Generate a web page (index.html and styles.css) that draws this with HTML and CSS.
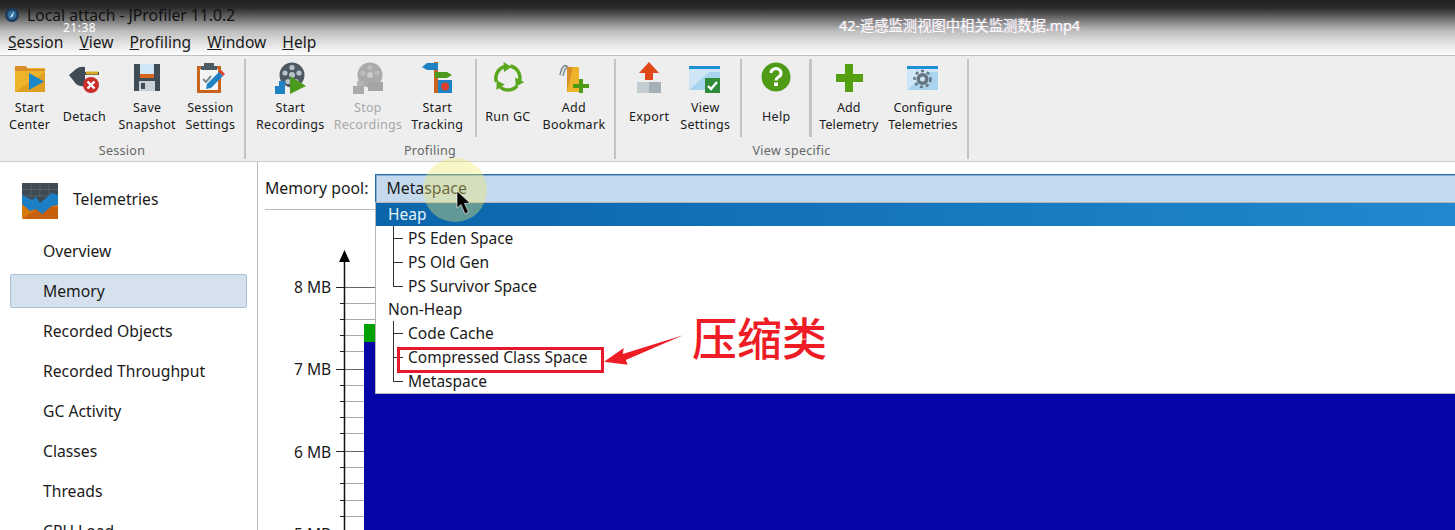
FILE: index.html
```html
<!DOCTYPE html>
<html lang="en">
<head>
  <meta charset="UTF-8">
  <title>Local attach - JProfiler 11.0.2</title>
  <link rel="stylesheet" href="styles.css">
</head>
<body>
<div class="app">
  <div class="shade"></div>
  <div class="clock">21:38</div>
  <div class="video-name">42-遥感监测视图中相关监测数据.mp4</div>

  <header class="titlebar">
    <svg class="app-icon" viewBox="0 0 14 14"><circle cx="7" cy="7" r="7" fill="#1c3b5a"/><circle cx="7" cy="7" r="4.500" fill="#2f6d9e"/><path d="M9.500 3 L6 7.500 L5 10 L7.500 8.500 Z" fill="#e8eef4"/></svg>
    <span>Local attach - JProfiler 11.0.2</span>
  </header>

  <nav class="menubar">
    <span><u>S</u>ession</span>
    <span><u>V</u>iew</span>
    <span><u>P</u>rofiling</span>
    <span><u>W</u>indow</span>
    <span><u>H</u>elp</span>
  </nav>

  <div class="toolbar">
    <section class="group group-session">
      <div class="buttons">
        <div class="tool">
          <svg viewBox="0 0 32 32"><path d="M1 6h30v24H1z" fill="#edb32b"/><path d="M1 4h11l2 3h17v2H1z" fill="#d9902a"/><path d="M1 30 L31 10 V30z" fill="#dfa022"/><path d="M15 11 L30 19.500 L15 28z" fill="#1b86c8"/></svg>
          <div class="label">Start<br>Center</div>
        </div>
        <div class="tool">
          <svg viewBox="0 0 32 32"><path d="M1 13 L8 7 Q12 4 17 5 V10 H31 V13 H17 V24 Q12 25 8 22 Z" fill="#3f4c56"/><path d="M18 9.500h12v3H18z" fill="#d9a825"/><circle cx="23" cy="23" r="8" fill="#c9302c"/><path d="M19.500 19.500l7 7m0-7l-7 7" stroke="#fff" stroke-width="2.400"/></svg>
          <div class="label">Detach</div>
        </div>
        <div class="tool">
          <svg viewBox="0 0 32 32"><path d="M3 2h26v27H3z" fill="#3f4c56"/><path d="M9 2h14v10H9z" fill="#cfe6f7"/><path d="M9 12h14v4H9z" fill="#d9661f"/><path d="M8 19h16v10H8z" fill="#c9d1d6"/><path d="M10 21h4v6h-4z" fill="#3f4c56"/></svg>
          <div class="label">Save<br>Snapshot</div>
        </div>
        <div class="tool tool-settings">
          <svg viewBox="0 0 32 32"><path d="M3 4h24v27H3z" fill="#c8641e"/><path d="M6 7h18v21H6z" fill="#f5f5f5"/><path d="M10 1h10v3h3v4H7V4h3z" fill="#4c5a64"/><path d="M9 17l3 3 5-6" fill="none" stroke="#7c8b94" stroke-width="2"/><path d="M12 27l1-5L25 10l4 4-12 12z" fill="#1e82c4"/><path d="M25 10l2-2 4 4-2 2z" fill="#d9402a"/></svg>
          <div class="label">Session<br>Settings</div>
        </div>
      </div>
      <div class="group-name">Session</div>
    </section>

    <section class="group group-profiling">
      <div class="buttons">
        <div class="tool">
          <svg viewBox="0 0 32 32"><circle cx="18" cy="13" r="12.500" fill="#4d5a64"/><circle cx="18" cy="13" r="3" fill="#b9c2c8"/><circle cx="18" cy="5.500" r="2.600" fill="#b9c2c8"/><circle cx="25" cy="11" r="2.600" fill="#b9c2c8"/><circle cx="11" cy="11" r="2.600" fill="#b9c2c8"/><circle cx="22" cy="19.500" r="2.600" fill="#b9c2c8"/><circle cx="14" cy="19.500" r="2.600" fill="#b9c2c8"/><path d="M16 14 L32 24 L16 32z" fill="#4a9a1e"/><path d="M1 24h10v8H1z" fill="#1e82c4"/><path d="M5 19h6v5H5z" fill="#1e82c4"/></svg>
          <div class="label">Start<br>Recordings</div>
        </div>
        <div class="tool off">
          <svg viewBox="0 0 32 32"><circle cx="18" cy="13" r="12.500" fill="#aaa"/><circle cx="18" cy="13" r="3" fill="#ccc"/><circle cx="18" cy="5.500" r="2.600" fill="#bbb"/><circle cx="25" cy="11" r="2.600" fill="#bbb"/><circle cx="11" cy="11" r="2.600" fill="#bbb"/><path d="M1 24h11v8H1z" fill="#aaa"/><path d="M5 19h7v5H5z" fill="#b5b5b5"/><path d="M16 20h15v9H16z" fill="#a5a5a5"/></svg>
          <div class="label">Stop<br>Recordings</div>
        </div>
        <div class="tool tool-tracking">
          <svg viewBox="0 0 32 32"><path d="M13 0h4v31h-4z" fill="#c8641e"/><path d="M1 5 L6 1 H17 V8 H6z" fill="#1e82c4"/><path d="M14 10 H26 L31 13 L26 16 H14z" fill="#4a9a1e"/><path d="M17 18h14v13H17z" fill="#1e82c4"/><circle cx="24" cy="24.500" r="4" fill="#d9402a"/></svg>
          <div class="label">Start<br>Tracking</div>
        </div>
        <div class="short-sep sep-tracking"></div>
        <div class="tool tool-gc">
          <svg viewBox="0 0 32 32">
            <g fill="#5aa71e"><path d="M4.500 20A12 12 0 0 1 13 4.500" fill="none" stroke="#5aa71e" stroke-width="3.500"/><path d="M11.500 0 L19.500 5 L12 10z"/></g>
            <g fill="#5aa71e" transform="rotate(120 16 16)"><path d="M4.500 20A12 12 0 0 1 13 4.500" fill="none" stroke="#5aa71e" stroke-width="3.500"/><path d="M11.500 0 L19.500 5 L12 10z"/></g>
            <g fill="#5aa71e" transform="rotate(240 16 16)"><path d="M4.500 20A12 12 0 0 1 13 4.500" fill="none" stroke="#5aa71e" stroke-width="3.500"/><path d="M11.500 0 L19.500 5 L12 10z"/></g>
          </svg>
          <div class="label">Run GC</div>
        </div>
        <div class="tool tool-bookmark">
          <svg viewBox="0 0 32 32"><path d="M11 7 C8 1 4 3 2 13 M12 6 C8 4 6 8 5 14" fill="none" stroke="#7c8b94" stroke-width="1.500"/><path d="M9 5h12v25H9z" fill="#edb32b"/><path d="M9 30 V5 H15z" fill="#d9902a"/><path d="M21 17h4v5h6v4h-6v5h-4v-5h-6v-4h6z" fill="#4f9a16"/></svg>
          <div class="label">Add<br>Bookmark</div>
        </div>
      </div>
      <div class="group-name">Profiling</div>
    </section>

    <section class="group group-view">
      <div class="buttons">
        <div class="tool">
          <svg viewBox="0 0 32 32"><path d="M16 0 L26 11 H20 V18 H12 V11 H6z" fill="#e0481a"/><path d="M4 20h12v11H4z" fill="#c3ccd0"/><path d="M16 20h12v11H16z" fill="#a5b0b6"/></svg>
          <div class="label">Export</div>
        </div>
        <div class="tool tool-view">
          <svg viewBox="0 0 32 32"><path d="M0 4h31v24H0z" fill="#cfe6f7"/><path d="M0 28 L20 10 L31 10 V28z" fill="#a9d4ef"/><path d="M0 4h31v3H0z" fill="#1e91d6"/><path d="M16 16h15v15H16z" fill="#2f8a3a"/><path d="M19 24l3 3 6-7" fill="none" stroke="#fff" stroke-width="2.400"/></svg>
          <div class="label">View<br>Settings</div>
        </div>
        <div class="short-sep sep-view"></div>
        <div class="tool tool-help">
          <svg viewBox="0 0 32 32"><circle cx="16" cy="15" r="14.500" fill="#4f9a16"/><path d="M11 11a5 4.500 0 1 1 7.500 4c-1.500 1-2.500 1.500-2.500 3.500" fill="none" stroke="#fff" stroke-width="3"/><path d="M14 20.500h4v3.500h-4z" fill="#fff"/></svg>
          <div class="label">Help</div>
        </div>
        <div class="short-sep thick-sep"></div>
        <div class="tool tool-add tight">
          <svg viewBox="0 0 32 32"><path d="M12 2h8v10h10v8H20v10h-8V20H3v-8h9z" fill="#55a011"/></svg>
          <div class="label">Add<br>Telemetry</div>
        </div>
        <div class="tool tight">
          <svg viewBox="0 0 32 32"><path d="M0 4h31v24H0z" fill="#cfe6f7"/><path d="M0 28 L20 10 L31 10 V28z" fill="#a9d4ef"/><path d="M0 4h31v3H0z" fill="#1e91d6"/><circle cx="15.500" cy="17" r="6" fill="#66747e"/><circle cx="15.500" cy="17" r="8" fill="none" stroke="#66747e" stroke-width="2.500" stroke-dasharray="3 3"/><circle cx="15.500" cy="17" r="2.500" fill="#cfe6f7"/></svg>
          <div class="label">Configure<br>Telemetries</div>
        </div>
      </div>
      <div class="group-name">View specific</div>
    </section>
  </div>

  <main class="main">
    <aside class="sidebar">
      <div class="side-head">
        <svg viewBox="0 0 36 36"><rect width="36" height="36" rx="2" fill="#d67a0a"/><path d="M0 36 L18 24 L36 24 V36z" fill="#c7600a"/><path d="M0 0h36v20H0z" fill="#3d4a54"/><path d="M0 6.500H36M0 13H36M9 0V14M18 0V14M27 0V14" stroke="#55626c"/><path d="M0 12 L6 15 L10 17 L14 14 L18 20 L24 15 L30 10 L36 12 V22 L30 23 L26 26 L20 31 L14 26 L8 28 L0 21z" fill="#1a7fc4"/></svg>
        <span>Telemetries</span>
      </div>
      <ul class="side-list">
        <li>Overview</li>
        <li class="current">Memory</li>
        <li>Recorded Objects</li>
        <li>Recorded Throughput</li>
        <li>GC Activity</li>
        <li>Classes</li>
        <li>Threads</li>
        <li>CPU Load</li>
      </ul>
    </aside>

    <div class="content">
      <div class="pool-row">
        <label>Memory pool:</label>
        <div class="combo">Metaspace</div>
      </div>
      <div class="chart">
        <svg class="chart-svg" viewBox="0 0 1197 320">
          <path d="M86 93.500H117M86 109.500H117M86 125.500H117M86 141.500H106M86 175.500H106M86 191.500H106M86 207.500H106M86 223.500H106M86 257.500H106M86 273.500H106M86 290.500H106M86 306.500H106" stroke="#aaa"/>
          <path d="M86 77.500H117M86 159.500H106M86 241.500H106" stroke="#666"/>
          <path d="M106 114H117V132H106z" fill="#00a000"/>
          <path d="M106 132H1197V320H106z" fill="#0606a8"/>
          <path d="M86.500 46V320" stroke="#111" stroke-width="1.500"/>
          <path d="M86.500 40L92 52H81z" fill="#000"/>
          <path d="M78 77.500H86M78 159.500H86M78 241.500H86" stroke="#222"/>
          <path d="M82 93.500H86M82 109.500H86M82 125.500H86M82 141.500H86M82 175.500H86M82 191.500H86M82 207.500H86M82 223.500H86M82 257.500H86M82 273.500H86M82 290.500H86M82 306.500H86" stroke="#222"/>
        </svg>
        <div class="y-label y8">8 MB</div>
        <div class="y-label y7">7 MB</div>
        <div class="y-label y6">6 MB</div>
        <div class="y-label y5">5 MB</div>
      </div>
    </div>
  </main>

  <div class="popup">
    <div class="pool-head selected">Heap</div>
    <div class="pool-set">
      <div class="pool-item">PS Eden Space</div>
      <div class="pool-item">PS Old Gen</div>
      <div class="pool-item">PS Survivor Space</div>
    </div>
    <div class="pool-head">Non-Heap</div>
    <div class="pool-set">
      <div class="pool-item">Code Cache</div>
      <div class="pool-item">Compressed Class Space</div>
      <div class="pool-item">Metaspace</div>
    </div>
  </div>

  <div class="mark-box"></div>
  <svg class="mark-arrow" viewBox="0 0 80 30"><path d="M0 27 L20 13 L19 19 L80 0 L22 25 L24 30z" fill="#ee1c25"/></svg>
  <div class="mark-text">压缩类</div>

  <div class="halo"></div>
  <svg class="pointer" viewBox="0 0 16 24"><path d="M1 0 L1 17 L5 13.500 L9 23 L12.500 21 L8.500 12.500 L14 12z" fill="#000" stroke="#fff" stroke-width=".6"/></svg>
</div>
</body>
</html>
```

FILE: styles.css
```css
* {
  box-sizing: border-box;
}
html, body {
  margin: 0;
  height: 100%;
  overflow: hidden;
}
body {
  background: #fff;
  color: #1a1a1a;
  font-family: "Noto Sans", "Noto Sans CJK SC", sans-serif;
  font-size: 15.700px;
}
.app {
  position: relative;
  width: 1455px;
  height: 530px;
  overflow: hidden;
  display: flex;
  flex-direction: column;
}

/* video player overlay */
.shade {
  position: absolute;
  top: 0;
  left: 0;
  right: 0;
  height: 55px;
  background: linear-gradient(#202020 0, #2c2c2c 8px, #777 20px, #bdbdbd 31px, #dedede 42px, rgba(237,237,237,0) 55px);
}
.clock {
  position: absolute;
  top: 19px;
  left: 63px;
  z-index: 3;
  color: #fff;
  font-size: 12px;
  letter-spacing: .5px;
  line-height: 18px;
}
.video-name {
  position: absolute;
  top: 17px;
  left: 839px;
  z-index: 3;
  color: #fff;
  font-size: 14.300px;
  line-height: 18px;
  text-shadow: 1px 0 0 rgba(255,190,190,.5), -1px 0 0 rgba(170,210,255,.5);
}

.titlebar {
  position: relative;
  height: 30px;
  display: flex;
  align-items: center;
  padding-left: 5px;
  font-size: 15.700px;
  color: #111;
}
.app-icon {
  width: 14px;
  height: 14px;
  margin-right: 8px;
}
.menubar {
  position: relative;
  height: 26px;
  display: flex;
  gap: 16px;
  padding-left: 8px;
  font-size: 15.600px;
  line-height: 25px;
  border-bottom: 1px solid #bdbdbd;
}

.toolbar {
  height: 106px;
  display: flex;
  background: #eee;
  border-bottom: 1px solid #ccc;
  padding-top: 3px;
}
.group {
  height: 100px;
  display: flex;
  flex-direction: column;
  border-right: 2px solid #c4c4c4;
}
.group-session { width: 246px; }
.group-profiling { width: 370px; }
.group-view { width: 353px; }
.buttons {
  flex: 1;
  display: flex;
}
.group-session .buttons { padding-left: 4px; gap: 2.500px; }
.group-profiling .buttons { padding-left: 5px; }
.group-view .buttons { padding-left: 8px; }
.tool {
  height: 77px;
  padding: 0 5px;
  display: flex;
  flex-direction: column;
  align-items: center;
  font-size: 12.500px;
  letter-spacing: .3px;
  color: #1a1a1a;
}
.tool svg {
  width: 32px;
  height: 32px;
  margin-top: 3px;
  flex: none;
}
.tool.off {
  color: #a8a8a8;
  margin-left: -1px;
}
.tool.tight {
  letter-spacing: .1px;
}
.label {
  height: 36px;
  margin-top: 4px;
  display: flex;
  align-items: center;
  text-align: center;
  line-height: 17px;
  white-space: nowrap;
}
.short-sep {
  width: 2px;
  height: 78px;
  background: #c4c4c4;
}
.thick-sep {
  width: 3px;
  margin-left: 12px;
}
.tool-settings { margin-left: -3px; }
.tool-tracking { margin-left: -1px; }
.sep-tracking { margin-left: 7px; }
.tool-gc { margin-left: 3px; }
.tool-bookmark { margin-left: 2px; }
.tool-view { margin-left: 1px; }
.sep-view { margin-left: 5px; }
.tool-help { margin-left: 13px; }
.tool-add { margin-left: 2px; }
.group-name {
  height: 18px;
  color: #666;
  font-size: 12.500px;
  letter-spacing: .3px;
  text-align: center;
  line-height: 20px;
}

.main {
  flex: 1;
  display: flex;
  min-height: 0;
}
.sidebar {
  width: 258px;
  flex: none;
  border-right: 1px solid #bbb;
  padding: 21px 10px 0;
  overflow: hidden;
}
.side-head {
  display: flex;
  align-items: center;
  gap: 15px;
  padding-left: 12px;
  height: 36px;
}
.side-head svg {
  width: 36px;
  height: 36px;
}
.side-head span {
  padding-bottom: 5px;
}
.side-list {
  list-style: none;
  margin: 15px 0 0;
  padding: 0;
}
.side-list li {
  height: 34px;
  margin-bottom: 6px;
  padding-left: 32px;
  line-height: 33px;
  border: 1px solid transparent;
  width: 237px;
}
.side-list li.current {
  background: #d5e1ec;
  border-color: #a9c1d9;
  border-radius: 2px;
}

.content {
  flex: 1;
  display: flex;
  flex-direction: column;
  min-width: 0;
}
.pool-row {
  height: 48px;
  margin-left: 7px;
  padding-top: 12px;
  display: flex;
  gap: 7px;
  font-size: 15.800px;
  border-bottom: 1px solid #bbb;
}
.pool-row label {
  line-height: 28px;
}
.combo {
  flex: 1;
  height: 29px;
  padding-left: 10px;
  line-height: 27px;
  background: #c4d9ee;
  border: 1px solid #2a6ca6;
  border-right: 0;
  box-shadow: inset 1px 1px 0 rgba(42,108,166,.4);
}
.chart {
  flex: 1;
  position: relative;
}
.chart-svg {
  display: block;
  width: 1197px;
  height: 320px;
}
.y-label {
  position: absolute;
  left: 36px;
  line-height: 20px;
  font-size: 15.600px;
}
.y8 { top: 67px; }
.y7 { top: 149px; }
.y6 { top: 232px; }
.y5 { top: 314px; }

/* pool dropdown, lies over the chart */
.popup {
  position: absolute;
  left: 375px;
  top: 202px;
  width: 1080px;
  height: 192px;
  background: #fff;
  border: 1px solid #b5b5b5;
  border-right: 0;
  font-size: 15.500px;
  z-index: 1;
}
.pool-head {
  height: 23px;
  padding-left: 12px;
  line-height: 22px;
}
.pool-head.selected {
  background: linear-gradient(90deg, #0b65ab, #2089cf);
  color: #e8f2fb;
}
.pool-item {
  position: relative;
  height: 24px;
  padding-left: 32px;
  line-height: 24px;
}
.pool-item::before {
  content: "";
  position: absolute;
  left: 17px;
  top: 0;
  bottom: 0;
  border-left: 1px solid #333;
}
.pool-item::after {
  content: "";
  position: absolute;
  left: 17px;
  top: 12px;
  width: 10px;
  border-top: 1px solid #333;
}
.pool-item:last-child::before {
  bottom: 12px;
}

/* annotation drawn on the video */
.mark-box {
  position: absolute;
  left: 397px;
  top: 347px;
  width: 207px;
  height: 26px;
  border: 3px solid #e8192c;
  z-index: 2;
}
.mark-arrow {
  position: absolute;
  left: 604px;
  top: 335px;
  width: 79px;
  height: 30px;
  z-index: 2;
}
.mark-text {
  position: absolute;
  left: 692px;
  top: 305px;
  z-index: 2;
  color: #ee1c25;
  font-family: "Noto Sans CJK SC", sans-serif;
  font-size: 45px;
  font-weight: 500;
  line-height: 64px;
}

.halo {
  position: absolute;
  left: 423px;
  top: 158px;
  width: 64px;
  height: 64px;
  border-radius: 50%;
  background: rgba(240,235,110,.38);
  z-index: 2;
}
.pointer {
  position: absolute;
  left: 456px;
  top: 191px;
  width: 16px;
  height: 24px;
  z-index: 3;
}
```
